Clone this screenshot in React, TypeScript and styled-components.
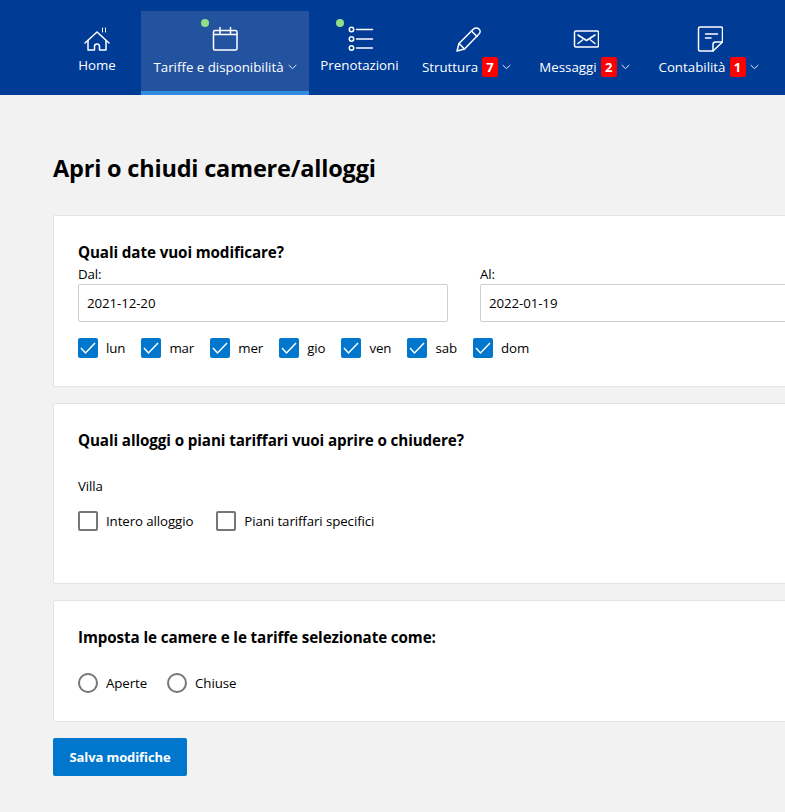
import React from 'react';
import styled, { createGlobalStyle } from 'styled-components';

const GlobalStyle = createGlobalStyle`
    html, body {
        margin: 0;
        padding: 0;
        height: 100%;
        overflow: hidden;
        background: #f2f2f2;
        color: #000;
        font-family: "Open Sans", "Noto Sans", "Liberation Sans", sans-serif;
        font-size: 14px;
    }
`;

const NavBar = styled.nav`
    display: flex;
    align-items: flex-start;
    height: 95px;
    padding-left: 66px;
    background: #003b95;
    overflow: hidden;
`;

const NavItem = styled.a<{ $width: number; $active?: boolean; $gap?: number }>`
    position: relative;
    box-sizing: border-box;
    flex: none;
    display: flex;
    flex-direction: column;
    align-items: center;
    width: ${(p) => p.$width}px;
    height: 84px;
    margin-top: 11px;
    margin-right: ${(p) => p.$gap ?? 0}px;
    padding-top: 14px;
    color: #fff;
    background: ${(p) => (p.$active ? '#23539f' : 'transparent')};
    border-bottom: 4px solid ${(p) => (p.$active ? '#2f8ce0' : 'transparent')};
`;

const NavIcon = styled.svg`
    display: block;
    width: 28px;
    height: 28px;
    fill: none;
    stroke: #fff;
    stroke-width: 1.5;
    stroke-linecap: round;
    stroke-linejoin: round;
`;

const NavLabel = styled.div<{ $low?: boolean }>`
    display: flex;
    align-items: center;
    height: 20px;
    margin-top: ${(p) => (p.$low ? 4 : 2)}px;
    font-size: 13.3px;
    white-space: nowrap;
`;

const StatusDot = styled.span<{ $left: number }>`
    position: absolute;
    top: 8px;
    left: ${(p) => p.$left}px;
    width: 8px;
    height: 8px;
    border-radius: 50%;
    background: #90e08a;
`;

const Badge = styled.span`
    display: inline-flex;
    align-items: center;
    justify-content: center;
    width: 16px;
    height: 20px;
    margin-left: 4px;
    border-radius: 2px;
    background: #ff0000;
    color: #fff;
    font-size: 13px;
    font-weight: 700;
`;

const Chevron = styled.svg`
    display: block;
    width: 9px;
    height: 6px;
    margin-left: 4px;
    fill: none;
    stroke: #dfe7f3;
    stroke-width: 1;
`;

const Main = styled.main`
    width: 822px;
    padding: 58px 0 0 53px;
`;

const PageTitle = styled.h1`
    margin: 0 0 31px;
    font-size: 23.5px;
    line-height: 31px;
    font-weight: 700;
    letter-spacing: -0.2px;
`;

const Card = styled.section<{ $height: number }>`
    box-sizing: border-box;
    height: ${(p) => p.$height}px;
    margin-bottom: 16px;
    padding: 0 24px;
    background: #fff;
    border: 1px solid #e3e3e3;
    border-radius: 2px;
`;

const CardTitle = styled.h2<{ $top: number }>`
    margin: ${(p) => p.$top}px 0 0;
    font-size: 15.2px;
    line-height: 20px;
    font-weight: 700;
    letter-spacing: -0.1px;
`;

const DateRow = styled.div`
    display: flex;
    gap: 32px;
`;

const DateField = styled.label`
    display: block;
    flex: none;
    width: 370px;
`;

const FieldLabel = styled.div`
    height: 22px;
    font-size: 13.3px;
    line-height: 24px;
    letter-spacing: -0.1px;
`;

const DateValue = styled.div`
    box-sizing: border-box;
    display: flex;
    align-items: center;
    height: 38px;
    padding: 0 8px;
    border: 1px solid #cfcfcf;
    border-radius: 2px;
    font-size: 13.3px;
    letter-spacing: -0.1px;
`;

const OptionRow = styled.div<{ $top: number; $gap: number }>`
    display: flex;
    align-items: center;
    gap: ${(p) => p.$gap}px;
    margin-top: ${(p) => p.$top}px;
`;

const Option = styled.label`
    display: flex;
    align-items: center;
    gap: 8px;
    height: 20px;
    font-size: 13.3px;
    letter-spacing: -0.1px;
`;

const CheckBox = styled.span<{ $checked?: boolean }>`
    box-sizing: border-box;
    display: flex;
    align-items: center;
    justify-content: center;
    width: 20px;
    height: 20px;
    border-radius: 2px;
    border: 2px solid ${(p) => (p.$checked ? '#0077cc' : '#767676')};
    background: ${(p) => (p.$checked ? '#0077cc' : '#fff')};
`;

const CheckMark = styled.svg`
    flex: none;
    width: 16px;
    height: 16px;
    fill: none;
    stroke: #fff;
    stroke-width: 1.5;
`;

const Radio = styled.span`
    box-sizing: border-box;
    width: 20px;
    height: 20px;
    border-radius: 50%;
    border: 2px solid #767676;
    background: #fff;
`;

const PlainText = styled.div`
    margin-top: 26px;
    font-size: 13.3px;
    line-height: 20px;
    letter-spacing: -0.1px;
`;

const SaveButton = styled.button`
    display: block;
    width: 134px;
    height: 38px;
    padding: 0;
    border: 0;
    border-radius: 2px;
    background: #0077cc;
    color: #fff;
    font-family: inherit;
    font-size: 13px;
    font-weight: 700;
    letter-spacing: -0.1px;
`;

const days = ['lun', 'mar', 'mer', 'gio', 'ven', 'sab', 'dom'];

const Caret = () => (
    <Chevron viewBox="0 0 9 6">
        <path d="M.7 1l3.8 3.6L8.3 1" />
    </Chevron>
);

const Tick = () => (
    <CheckMark viewBox="0 0 16 16">
        <path d="M1 8l4.5 5L15 3" />
    </CheckMark>
);

function App(): React.ReactElement {
    return (
        <>
            <GlobalStyle />
            <NavBar>
                <NavItem $width={62} $gap={13}>
                    <NavIcon viewBox="0 0 28 28">
                        <path d="M2 18L14 7l12 11" />
                        <path d="M5 15.5V25h6.5v-3.5a2.5 2.5 0 0 1 5 0V25H23v-9.5" />
                        <path d="M19.5 3v4M22.5 3v4" strokeWidth="1" />
                    </NavIcon>
                    <NavLabel>Home</NavLabel>
                </NavItem>
                <NavItem $width={168} $active $gap={0}>
                    <StatusDot $left={60} />
                    <NavIcon viewBox="0 0 28 28">
                        <rect x="2.5" y="5.5" width="23.5" height="19.5" rx="1.5" />
                        <path d="M2.5 9.5H26M9 2.5v6M19.5 2.5v6" />
                    </NavIcon>
                    <NavLabel $low>
                        Tariffe e disponibilità
                        <Caret />
                    </NavLabel>
                </NavItem>
                <NavItem $width={101}>
                    <StatusDot $left={27} />
                    <NavIcon viewBox="0 0 28 28">
                        <circle cx="5.5" cy="4.5" r="2.2" />
                        <circle cx="5.5" cy="14" r="2.2" />
                        <circle cx="5.5" cy="23" r="2.2" />
                        <path d="M10.5 4.5h16M10.5 14h16M10.5 23h16" />
                    </NavIcon>
                    <NavLabel>Prenotazioni</NavLabel>
                </NavItem>
                <NavItem $width={113}>
                    <NavIcon viewBox="0 0 28 28">
                        <path d="M4 26l2-7.5L20.5 4c1.5-1.5 4-1.5 5.500 0s1.500 3.500 0 5L11.500 24z" />
                        <path d="M6 18.5l5.5 5.5M18.5 6l5.5 5.5" />
                    </NavIcon>
                    <NavLabel $low>
                        Struttura<Badge>7</Badge>
                        <Caret />
                    </NavLabel>
                </NavItem>
                <NavItem $width={123}>
                    <NavIcon viewBox="0 0 28 28">
                        <rect x="3.5" y="6" width="24" height="16" rx="1.5" />
                        <path d="M7 10l8.5 5.5L24 10M7 18.5l4.500-3.500M24 18.500L19.500 15" />
                    </NavIcon>
                    <NavLabel $low>
                        Messaggi<Badge>2</Badge>
                        <Caret />
                    </NavLabel>
                </NavItem>
                <NavItem $width={125}>
                    <NavIcon viewBox="0 0 28 28">
                        <path d="M18 26H5a1.5 1.5 0 0 1-1.5-1.5v-21A1.5 1.5 0 0 1 5 2h21a1.5 1.5 0 0 1 1.5 1.5V17z" />
                        <path d="M18 26v-6.5a2.5 2.5 0 0 1 2.5-2.5h7M10.5 9h12M10.5 13h5.5" />
                    </NavIcon>
                    <NavLabel $low>
                        Contabilità<Badge>1</Badge>
                        <Caret />
                    </NavLabel>
                </NavItem>
            </NavBar>
            <Main>
                <PageTitle>Apri o chiudi camere/alloggi</PageTitle>
                <Card $height={172}>
                    <CardTitle $top={26}>Quali date vuoi modificare?</CardTitle>
                    <DateRow>
                        <DateField>
                            <FieldLabel>Dal:</FieldLabel>
                            <DateValue>2021-12-20</DateValue>
                        </DateField>
                        <DateField>
                            <FieldLabel>Al:</FieldLabel>
                            <DateValue>2022-01-19</DateValue>
                        </DateField>
                    </DateRow>
                    <OptionRow $top={16} $gap={16}>
                        {days.map((day) => (
                            <Option key={day}>
                                <CheckBox $checked>
                                    <Tick />
                                </CheckBox>
                                {day}
                            </Option>
                        ))}
                    </OptionRow>
                </Card>
                <Card $height={181}>
                    <CardTitle $top={26}>Quali alloggi o piani tariffari vuoi aprire o chiudere?</CardTitle>
                    <PlainText>Villa</PlainText>
                    <OptionRow $top={15} $gap={23}>
                        <Option>
                            <CheckBox />
                            Intero alloggio
                        </Option>
                        <Option>
                            <CheckBox />
                            Piani tariffari specifici
                        </Option>
                    </OptionRow>
                </Card>
                <Card $height={122}>
                    <CardTitle $top={26}>Imposta le camere e le tariffe selezionate come:</CardTitle>
                    <OptionRow $top={26} $gap={20}>
                        <Option>
                            <Radio />
                            Aperte
                        </Option>
                        <Option>
                            <Radio />
                            Chiuse
                        </Option>
                    </OptionRow>
                </Card>
                <SaveButton>Salva modifiche</SaveButton>
            </Main>
        </>
    );
}

export default App;
